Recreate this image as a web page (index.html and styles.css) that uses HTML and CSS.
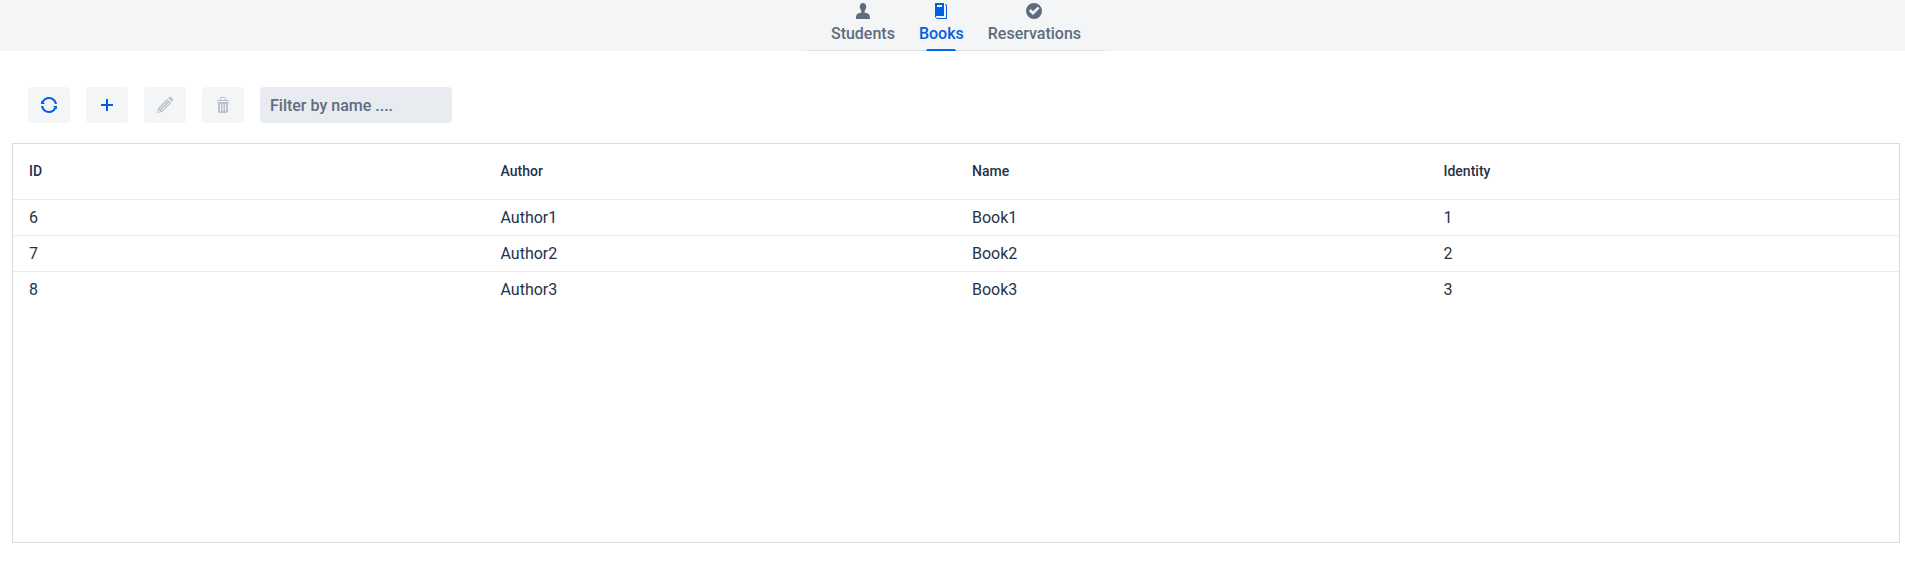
FILE: index.html
```html
<!DOCTYPE html>
<html lang="en">
<head>
<meta charset="utf-8">
<title>Books</title>
<link rel="stylesheet" href="styles.css">
</head>
<body>
<header class="navbar">
  <nav class="tabs">
    <a class="tab">
      <svg class="icon" viewBox="0 0 16 16"><path d="M5 3.200C5 1.200 6.200 0 8 0s3 1.200 3 3.200c.5.300.4 1.500-.1 2-.2 1.200-.7 2.100-1.200 2.600v1.100c0 .6.600.9 1.500 1.100 2.800.6 3.800 1.500 3.800 6H1c0-4.500 1-5.400 3.800-6 .9-.2 1.500-.5 1.500-1.100V7.800C5.800 7.300 5.300 6.400 5.100 5.200c-.5-.5-.6-1.700-.1-2z"/></svg>
      <span>Students</span>
    </a>
    <a class="tab tab-selected">
      <svg class="icon" viewBox="0 0 16 16"><path fill-rule="evenodd" d="M2 0h9v13H3v1l1 1h9V2.500L12 2V1l2 1v14H4l-2-2zM4 2v2h5V2z"/></svg>
      <span>Books</span>
    </a>
    <a class="tab">
      <svg class="icon" viewBox="0 0 16 16"><path fill-rule="evenodd" d="M8 0a8 8 0 1 0 0 16A8 8 0 0 0 8 0zM7 12L2.900 7.900l1.900-1.800L7 8.300l4.900-4.800 1.500 2z"/></svg>
      <span>Reservations</span>
    </a>
  </nav>
</header>
<main class="content">
  <div class="toolbar">
    <button class="button" aria-label="Refresh">
      <svg class="icon" viewBox="0 0 16 16"><path d="M8 0C4.700 0 1.900 2 .8 4.800L0 3.200V7h4.200L2.500 5.800C3.400 3.600 5.500 2 8 2c2.900 0 5.300 2 5.900 5H16c-.6-4-4-7-8-7zM0 9c.6 4 4 7 8 7 3.300 0 6.100-2 7.200-4.800l.8 1.600V9h-4.200l1.700 1.200C12.600 12.400 10.500 14 8 14c-2.900 0-5.300-2-5.900-5z"/></svg>
    </button>
    <button class="button" aria-label="Add">
      <svg class="icon" viewBox="0 0 16 16"><path d="M7 2h2v5h5v2H9v5H7V9H2V7h5z"/></svg>
    </button>
    <button class="button" aria-label="Edit" disabled>
      <svg class="icon" viewBox="0 0 16 16"><path fill-rule="evenodd" d="M0 16l1-5 9-9 4 4-9 9zM2.500 11.800l.4.400 7.800-7.800-.4-.4zM4.100 13.300l.4.400 7.800-7.800-.4-.4zM1.100 14l.9.900 1.300-.4-1.800-1.800zM11 1.100C12-.1 13.800-.4 15.100.9s1.100 3.100-.1 4.100z"/></svg>
    </button>
    <button class="button" aria-label="Delete" disabled>
      <svg class="icon" viewBox="0 0 16 16"><path fill-rule="evenodd" d="M14 3H11V2c0-1.300-.7-2-2-2H7C5.700 0 5 .7 5 2v1H2v1h12zM6 3V2c0-.6.400-1 1-1h2c.6 0 1 .4 1 1v1zM2 5v1h1v8c0 1.300.7 2 2 2h6c1.300 0 2-.7 2-2V6h1V5zM5 7v7h1V7zM7.500 7v7h1V7zM10 7v7h1V7z"/></svg>
    </button>
    <input class="filter" type="text" placeholder="Filter by name ....">
  </div>
  <div class="grid">
    <div class="row row-header"><span>ID</span><span>Author</span><span>Name</span><span>Identity</span></div>
    <div class="row"><span>6</span><span>Author1</span><span>Book1</span><span>1</span></div>
    <div class="row"><span>7</span><span>Author2</span><span>Book2</span><span>2</span></div>
    <div class="row"><span>8</span><span>Author3</span><span>Book3</span><span>3</span></div>
  </div>
</main>
</body>
</html>
```
FILE: styles.css
```css
* { box-sizing: border-box; }
body {
  margin: 0;
  background: #fff;
  color: #243349;
  font: 400 16px/19px Roboto, sans-serif;
}
.icon { display: block; width: 16px; height: 16px; fill: currentColor; }
.navbar {
  display: flex;
  justify-content: center;
  height: 51px;
  padding-left: 7px;
  background: #f3f5f7;
}
.tabs {
  display: flex;
  padding: 0 12px;
  box-shadow: inset 0 -1px #dce1e8;
}
.tab {
  display: flex;
  flex-direction: column;
  align-items: center;
  position: relative;
  padding: 3px 12px 0;
  color: #5f6c7f;
  font-weight: 500;
}
.tab span { margin-top: 5px; }
.tab-selected { color: #0060df; }
.tab-selected::after {
  content: "";
  position: absolute;
  bottom: 0;
  left: 50%;
  width: 30px;
  height: 2px;
  margin-left: -15px;
  border-radius: 2px 2px 0 0;
  background: #006af5;
}
.content { padding: 36px 5px 0 12px; }
.toolbar { display: flex; gap: 16px; padding-left: 16px; }
.button {
  display: flex;
  align-items: center;
  justify-content: center;
  width: 42px;
  height: 36px;
  padding: 0;
  border: 0;
  border-radius: 4px;
  background: #f3f5f7;
  color: #0060df;
}
.button:disabled { color: #bac2cd; }
.filter {
  width: 192px;
  height: 36px;
  padding: 9px 10px 8px;
  border: 0;
  border-radius: 4px;
  background: #e8ebef;
  font: 500 16px/19px Roboto, sans-serif;
}
.filter::placeholder { color: #5f6c7f; opacity: 1; }
.grid {
  height: 400px;
  margin-top: 20px;
  border: 1px solid #dadce0;
}
.row {
  display: grid;
  grid-template-columns: repeat(4, 1fr);
  align-items: start;
  height: 36px;
  padding-top: 8px;
  border-bottom: 1px solid #e8ebef;
}
.row:last-child { border-bottom: 0; }
.row span { padding: 0 16px; }
.row-header {
  height: 56px;
  padding-top: 19px;
  font-size: 14px;
  font-weight: 500;
  line-height: 16px;
}
```
